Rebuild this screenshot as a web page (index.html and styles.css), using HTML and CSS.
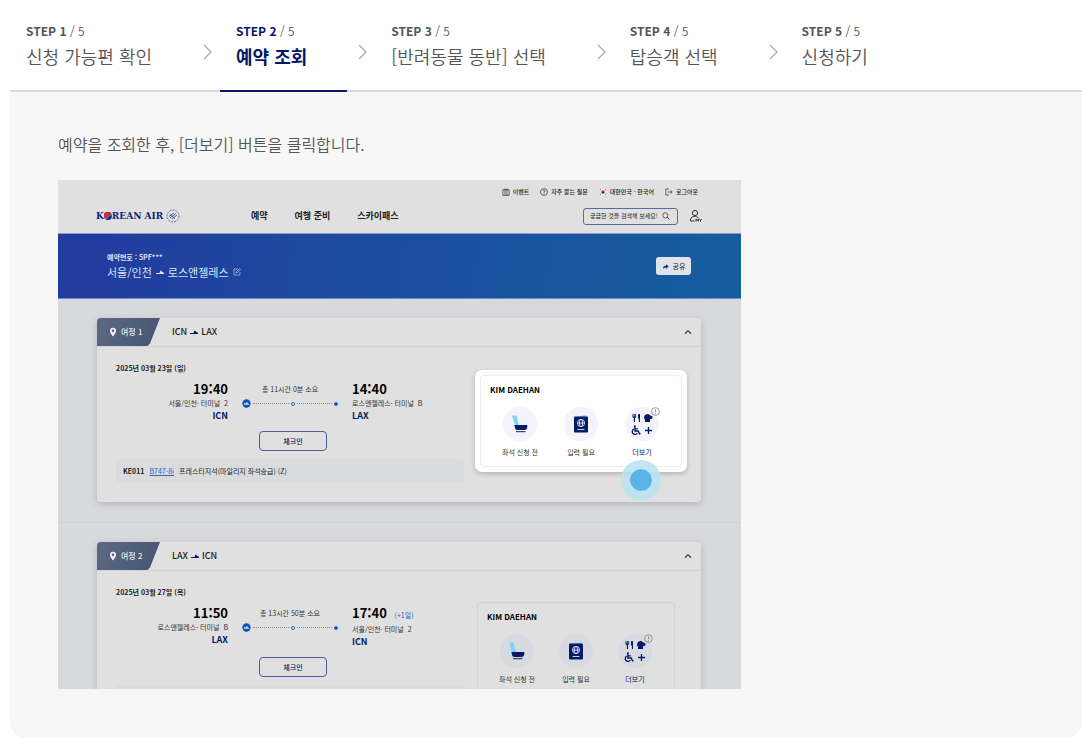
FILE: index.html
```
<!DOCTYPE html>
<html lang="ko">
<head>
  <meta charset="UTF-8">
  <title>[반려동물 동반] 신청 방법</title>
  <meta name="viewport" content="width=device-width, initial-scale=1.0">
  <link rel="stylesheet" href="styles.css">
</head>
<body>
  <!-- 공통 아이콘 -->
  <svg class="sprite" aria-hidden="true">
    <symbol id="chevron" viewBox="0 0 10 18">
      <path d="M1 2l7 7-7 7" fill="none" stroke="#aaa" stroke-width="1.3"/>
    </symbol>
    <symbol id="up" viewBox="0 0 8 6">
      <path d="M1 4.7l3-3 3 3" fill="none" stroke="#222" stroke-width="1.1"/>
    </symbol>
    <symbol id="pin" viewBox="0 0 8 10">
      <path d="M4 .8a3.1 3.1 0 0 0-3.1 3.1C.9 6 4 9.4 4 9.4S7.1 6 7.1 3.9A3.1 3.1 0 0 0 4 .8zm0 4.2a1.2 1.2 0 1 1 0-2.4A1.2 1.2 0 0 1 4 5z" fill="#e8ebf0"/>
    </symbol>
    <symbol id="route" viewBox="0 0 8 5">
      <path d="M0 3h8v1H0zM3.6 3L4.4.6 8 3z" fill="currentColor"/>
    </symbol>
    <symbol id="plane" viewBox="0 0 10 10">
      <circle cx="5" cy="5" r="4.6" fill="#0b52bb"/>
      <path d="M2.2 6.5V4l1 .9h1.3L5 3.2h.7l.7 1.7c1 0 1.5.3 1.5.8v.8z" fill="#dfe6f2"/>
    </symbol>
    <symbol id="seat" viewBox="0 0 18 18">
      <path d="M1 .5h4.500l2.500 10H4z" fill="#7fd3f5"/>
      <path d="M3.300 10h13v1.800c0 1.900-1 3.200-2.800 3.200H6.500c-1.500 0-2.200-.8-2.500-2.200z" fill="#051a66"/>
      <path d="M5 16.200h9.500v1H5z" fill="#051a66"/>
    </symbol>
    <symbol id="passport" viewBox="0 0 18 18">
      <path d="M4 1.800L14.500 0v2.500H4z" fill="#7fd3f5"/>
      <rect x="2" y="1.500" width="14" height="16" rx="1" fill="#051a66"/>
      <g fill="none" stroke="#dfe6f7" stroke-width=".9">
        <circle cx="9" cy="8" r="3.600"/>
        <ellipse cx="9" cy="8" rx="1.600" ry="3.600"/>
        <path d="M5.400 8h7.200M5.500 14.500h7"/>
      </g>
    </symbol>
    <symbol id="more" viewBox="0 0 22 22">
      <g fill="#051a66">
        <path d="M1.500 1h.8v2.500h.6V1h.8v2.500h.6V1h.8v3.200L4 5v4H2.800V5L1.500 4.200zM7 1.200L9 1v8H7.900V5.500H7z"/>
        <path d="M14.500 1.500l3-.5 1 1 3 1.500-.3 2.300-2.200.4V9h-5V6.500l-1-1 .3-2.500z"/>
        <circle cx="3.800" cy="13.300" r="1"/>
      </g>
      <g fill="none" stroke="#051a66" stroke-width="1.300">
        <path d="M3.900 14v4h3.300l1.300 2.800 1-.4M4 15.800h2.800"/>
        <path d="M2.800 16.200a2.700 2.700 0 1 0 3.500 3.800M17.500 14v7M14 17.500h7"/>
      </g>
    </symbol>
    <symbol id="info" viewBox="0 0 10 10">
      <circle cx="5" cy="5" r="4.300" fill="none" stroke="#777" stroke-width=".8"/>
      <path d="M5 2.500v3.200M5 6.600v1" stroke="#666" stroke-width=".8"/>
    </symbol>
  </svg>

  <!-- 단계 탭 -->
  <nav class="steps">
    <a class="step" href="#step1"><span class="step-no"><b>STEP 1</b> / 5</span><span class="step-title">신청 가능편 확인</span></a>
    <svg class="step-arrow"><use href="#chevron"/></svg>
    <a class="step active" href="#step2"><span class="step-no"><b>STEP 2</b> / 5</span><span class="step-title">예약 조회</span></a>
    <svg class="step-arrow"><use href="#chevron"/></svg>
    <a class="step" href="#step3"><span class="step-no"><b>STEP 3</b> / 5</span><span class="step-title">[반려동물 동반] 선택</span></a>
    <svg class="step-arrow"><use href="#chevron"/></svg>
    <a class="step" href="#step4"><span class="step-no"><b>STEP 4</b> / 5</span><span class="step-title">탑승객 선택</span></a>
    <svg class="step-arrow"><use href="#chevron"/></svg>
    <a class="step" href="#step5"><span class="step-no"><b>STEP 5</b> / 5</span><span class="step-title">신청하기</span></a>
  </nav>

  <main class="panel" id="step2">
    <p class="guide">예약을 조회한 후, [더보기] 버튼을 클릭합니다.</p>

    <div class="shot">
      <!-- 상단 -->
      <header class="top">
        <div class="util">
          <a href="#event"><svg viewBox="0 0 9 9"><path d="M1 2h7v6.300H1zM3.400 2v6M5.600 2v6M2.500 1l2 1 2-1" fill="none" stroke="#333" stroke-width=".8"/></svg>이벤트</a>
          <a href="#faq"><svg viewBox="0 0 9 9"><circle cx="4.500" cy="4.500" r="3.900" fill="none" stroke="#333" stroke-width=".8"/><path d="M3.300 3.500c0-1.600 2.400-1.500 2.400 0 0 .8-1.200.8-1.200 1.700M4.500 6v.9" fill="none" stroke="#333" stroke-width=".8"/></svg>자주 묻는 질문</a>
          <a href="#lang"><svg viewBox="0 0 9 9"><path d="M0 1h9v7H0z" fill="#f3f3f3"/><path d="M2.500 4.500a2 2 0 0 1 4 0z" fill="#c8283c"/><path d="M2.500 4.500a2 2 0 0 0 4 0z" fill="#123a8c"/><path d="M.8 2.700l1.200-1M7 1.700l1.200 1M.8 6.300l1.200 1M7 7.300l1.200-1" stroke="#222" stroke-width=".9"/></svg>대한민국 - 한국어</a>
          <a href="#logout"><svg viewBox="0 0 9 9"><path d="M4.500 1H1v7h3.500M3 4.500h5M6.300 2.700l1.800 1.800-1.800 1.800" fill="none" stroke="#333" stroke-width=".8"/></svg>로그아웃</a>
        </div>
        <div class="gnb">
          <a class="logo" href="#home">K<svg class="logo-o" viewBox="0 0 8 8"><circle cx="4" cy="4" r="3.900" fill="#0a2a85"/><path d="M.1 5A3.900 3.900 0 0 1 7.300 2C6 1.700 4.800 2.500 4.200 4S1.800 6.300.1 5z" fill="#d0282c"/><path d="M.8 6.200C3 6.500 4 5.500 4.500 4.500S6 2.800 7.500 2.800" fill="none" stroke="#e0e0e0" stroke-width=".6"/></svg>REAN AIR<svg class="logo-sky" viewBox="0 0 14 14"><circle cx="7" cy="7" r="6" fill="none" stroke="#44558f" stroke-width=".8" stroke-dasharray="2 1"/><path d="M3 7.500l5-3.500M4 9l6-4.500M6 10l5-4M4 5.500l5 4" stroke="#33478a" stroke-width=".8"/></svg></a>
          <div class="menu">
            <a href="#booking">예약</a>
            <a href="#prepare">여행 준비</a>
            <a href="#skypass">스카이패스</a>
          </div>
          <form class="search">
            <input type="text" placeholder="궁금한 것을 검색해 보세요!" aria-label="검색">
            <button type="button" aria-label="검색하기"><svg viewBox="0 0 9 9"><circle cx="3.800" cy="3.800" r="2.900" fill="none" stroke="#333" stroke-width=".8"/><path d="M6 6l2.300 2.300" stroke="#333"/></svg></button>
          </form>
          <a class="my" href="#my" aria-label="마이"><svg viewBox="0 0 14 14"><circle cx="6" cy="4" r="2.600" fill="none" stroke="#333"/><path d="M5.500 12H1.300C1.300 9 3 7.500 5 7.300c2 0 3.500.5 4.500 2M7 12.500v-2.500l1.200 1.500L9.400 10v2.500M10.300 10l1.200 1.200L12.700 10M11.500 11v1.700" fill="none" stroke="#333"/></svg></a>
        </div>
      </header>

      <!-- 예약 정보 -->
      <section class="booking">
        <div>
          <p class="booking-no">예약번호 : 5PF***</p>
          <h2>서울/인천 <svg class="route"><use href="#route"/></svg> 로스앤젤레스 <svg class="edit" viewBox="0 0 8 8"><path d="M5 1H1v6h6V4M3 5l.3-1.300L6.500.6l1 .9-3.200 3.200z" fill="none" stroke="#b9c6e6" stroke-width=".7"/></svg></h2>
        </div>
        <button class="share" type="button"><svg viewBox="0 0 8 8"><path d="M1 6.500C1.200 4 2.500 3 4.500 3V1.500L7.500 4l-3 2.500V5C3 5 2 5.300 1 6.500z" fill="#051a66"/></svg>공유</button>
      </section>

      <!-- 여정 1 -->
      <section class="trip">
        <article class="card">
          <div class="card-head">
            <span class="badge"><svg><use href="#pin"/></svg>여정 1</span>
            <h3>ICN <svg class="route"><use href="#route"/></svg> LAX</h3>
            <button class="fold" type="button" aria-label="접기"><svg><use href="#up"/></svg></button>
          </div>
          <div class="card-body">
            <div class="info">
              <p class="date">2025년 03월 23일 (일)</p>
              <div class="flight">
                <div class="from">
                  <p class="time">19:40</p>
                  <p class="place">서울/인천· 터미널 <span>2</span></p>
                  <p class="code">ICN</p>
                </div>
                <div class="duration">
                  <p>총 11시간 0분 소요</p>
                  <div class="line"><svg><use href="#plane"/></svg><i></i><span class="via"></span><i></i><span class="end"></span></div>
                </div>
                <div class="to">
                  <p class="time">14:40</p>
                  <p class="place">로스앤젤레스· 터미널 <span>B</span></p>
                  <p class="code">LAX</p>
                </div>
              </div>
              <button class="checkin" type="button">체크인</button>
              <div class="aircraft"><b>KE011</b><a href="#b747">B747-8i</a><span>프레스티지석(마일리지 좌석승급) (Z)</span></div>
            </div>
            <div class="pax spotlight">
              <div class="pax-box">
                <h4>KIM DAEHAN</h4>
                <div class="pax-menu">
                  <button type="button"><span class="round"><svg><use href="#seat"/></svg></span>좌석 신청 전</button>
                  <button type="button"><span class="round"><svg><use href="#passport"/></svg></span>입력 필요</button>
                  <button class="more" type="button"><span class="round"><svg><use href="#more"/></svg></span>더보기<svg class="alert"><use href="#info"/></svg></button>
                </div>
              </div>
              <span class="pointer"></span>
            </div>
          </div>
        </article>
      </section>

      <!-- 여정 2 -->
      <section class="trip">
        <article class="card">
          <div class="card-head">
            <span class="badge"><svg><use href="#pin"/></svg>여정 2</span>
            <h3>LAX <svg class="route"><use href="#route"/></svg> ICN</h3>
            <button class="fold" type="button" aria-label="접기"><svg><use href="#up"/></svg></button>
          </div>
          <div class="card-body">
            <div class="info">
              <p class="date">2025년 03월 27일 (목)</p>
              <div class="flight">
                <div class="from">
                  <p class="time">11:50</p>
                  <p class="place">로스앤젤레스· 터미널 <span>B</span></p>
                  <p class="code">LAX</p>
                </div>
                <div class="duration">
                  <p>총 13시간 50분 소요</p>
                  <div class="line"><svg><use href="#plane"/></svg><i></i><span class="via"></span><i></i><span class="end"></span></div>
                </div>
                <div class="to">
                  <p class="time">17:40 <small>(+1일)</small></p>
                  <p class="place">서울/인천· 터미널 <span>2</span></p>
                  <p class="code">ICN</p>
                </div>
              </div>
              <button class="checkin" type="button">체크인</button>
              <div class="aircraft"></div>
            </div>
            <div class="pax">
              <div class="pax-box">
                <h4>KIM DAEHAN</h4>
                <div class="pax-menu">
                  <button type="button"><span class="round"><svg><use href="#seat"/></svg></span>좌석 신청 전</button>
                  <button type="button"><span class="round"><svg><use href="#passport"/></svg></span>입력 필요</button>
                  <button class="more" type="button"><span class="round"><svg><use href="#more"/></svg></span>더보기<svg class="alert"><use href="#info"/></svg></button>
                </div>
              </div>
            </div>
          </div>
        </article>
      </section>
    </div>
  </main>
</body>
</html>
```
FILE: styles.css
```
* {
  margin: 0;
  padding: 0;
  box-sizing: border-box;
}

body {
  padding: 0 10px 11px;
  background: #fff;
  color: #555;
  font-family: 'Noto Sans CJK KR', 'Noto Sans', sans-serif;
  font-weight: 350;
}

a {
  color: inherit;
  text-decoration: none;
}

button {
  border: 0;
  background: none;
  font: inherit;
  color: inherit;
  cursor: pointer;
}

svg {
  display: block;
  flex: none;
}

.sprite {
  position: absolute;
  width: 0;
  height: 0;
}

/* 단계 탭 */
.steps {
  display: flex;
  height: 92px;
  border-bottom: 2px solid #d9d9d9;
}

.step {
  display: flex;
  flex-direction: column;
  height: 92px;
  padding: 21px 40px 0 16px;
  white-space: nowrap;
}

.step-no {
  font-size: 12px;
  line-height: 20px;
}

.step-no b {
  font-weight: 700;
}

.step-title {
  margin-top: 2px;
  font-size: 18px;
  line-height: 26px;
}

.step.active {
  border-bottom: 2px solid #051766;
  border-radius: 1px;
}

.step.active b,
.step.active .step-title {
  color: #051766;
  font-weight: 700;
}

.step-arrow {
  width: 10px;
  height: 18px;
  margin: 43px 7px 0 11px;
}

/* 본문 */
.panel {
  padding: 39px 48px 49px;
  background: #f7f7f7;
  border-radius: 0 0 16px 16px;
}

.guide {
  margin-bottom: 23px;
  font-size: 16px;
  line-height: 26px;
}

.shot {
  max-width: 683px;
  aspect-ratio: 683 / 509;
  overflow: hidden;
  background: #d8d9dc;
  color: #222;
  font-size: 7px;
  font-weight: 400;
  line-height: 12px;
}

/* 상단 */
.top {
  height: 53px;
  padding: 6px 38px 0;
  background: #e0e0e0;
}

.util {
  display: flex;
  justify-content: flex-end;
  gap: 11px;
  padding-right: 5px;
  font-size: 6px;
  font-weight: 500;
}

.util a {
  display: flex;
  align-items: center;
  gap: 3px;
}

.util svg {
  width: 8px;
  height: 8px;
}

.gnb {
  display: flex;
  align-items: center;
  height: 18px;
  margin-top: 9px;
}

.logo {
  display: flex;
  align-items: center;
  width: 155px;
  color: #0a1f7b;
  font-family: 'DejaVu Serif', serif;
  font-size: 9px;
  font-weight: 700;
}

.logo-o {
  width: 8px;
  height: 8px;
}

.logo-sky {
  width: 14px;
  height: 14px;
  margin-left: 3px;
}

.menu {
  display: flex;
  flex: 1;
  gap: 27px;
  font-size: 9px;
  font-weight: 700;
}

.search {
  display: flex;
  align-items: center;
  width: 95px;
  height: 17px;
  padding: 0 7px 0 6px;
  border: 1px solid #5a68a8;
  border-radius: 3px;
}

.search input {
  flex: 1;
  min-width: 0;
  border: 0;
  outline: 0;
  background: none;
  font: inherit;
  font-size: 6px;
}

.search input::placeholder {
  color: #222;
}

.search svg {
  width: 8px;
  height: 8px;
}

.my {
  margin-left: 11px;
}

.my svg {
  width: 14px;
  height: 14px;
}

/* 예약 정보 */
.booking {
  display: flex;
  align-items: center;
  justify-content: space-between;
  height: 66px;
  padding: 0 50px 0 49px;
  background: linear-gradient(100deg, #233a9f, #1b4c9f 45%, #155e9e);
  border-top: 1px solid #8b9cc9;
  border-bottom: 1px solid #6f8fc9;
  color: #dde3f2;
}

.booking-no {
  font-weight: 700;
}

.booking h2 {
  display: flex;
  align-items: center;
  gap: 4px;
  font-size: 11px;
  font-weight: 400;
  line-height: 18px;
}

.route {
  width: 8px;
  height: 5px;
}

.edit {
  width: 8px;
  height: 8px;
}

.share {
  display: flex;
  align-items: center;
  justify-content: center;
  gap: 4px;
  width: 35px;
  height: 18px;
  background: #e0e4ea;
  border-radius: 3px;
  color: #223;
}

.share svg {
  width: 7px;
  height: 7px;
}

/* 여정 카드 */
.trip {
  padding: 19px 40px 20px 39px;
  border-bottom: 1px solid #d0d1d4;
}

.card {
  background: #e0e0e0;
  border-radius: 4px;
  box-shadow: 0 2px 6px rgba(60, 70, 90, 0.25);
}

.card-head {
  display: flex;
  align-items: center;
  height: 29px;
  border-bottom: 1px solid #d3d4d7;
}

.badge {
  display: flex;
  align-items: center;
  gap: 4px;
  width: 63px;
  height: 28px;
  padding-left: 12px;
  background: linear-gradient(120deg, #5c6a85, #46546f);
  border-radius: 4px 0 0 0;
  clip-path: polygon(0 0, 100% 0, 84% 92%, 80% 100%, 0 100%);
  color: #e8ebf0;
  font-size: 8px;
  font-weight: 500;
}

.badge svg {
  width: 8px;
  height: 10px;
}

.card h3 {
  display: flex;
  flex: 1;
  align-items: center;
  gap: 3px;
  margin-left: 12px;
  font-size: 9px;
  font-weight: 500;
}

.card h3 svg {
  color: #051a66;
}

.fold {
  padding: 4px 9px;
}

.fold svg {
  width: 8px;
  height: 6px;
}

.card-body {
  display: flex;
  justify-content: space-between;
  align-items: flex-start;
  padding: 0 14px 20px 19px;
}

.info {
  width: 348px;
  padding-top: 15px;
}

.date {
  font-weight: 700;
  line-height: 12px;
}

.flight {
  display: grid;
  grid-template-columns: 1fr 96px 1fr;
  gap: 14px;
  margin-top: 7px;
}

.from {
  text-align: right;
}

.time {
  color: #000;
  font-size: 13px;
  font-weight: 700;
  line-height: 16px;
}

.time small {
  margin-left: 4px;
  color: #2c62c8;
  font-size: 7px;
  font-weight: 400;
}

.place {
  color: #333;
}

.place span {
  margin-left: 2px;
}

.code {
  color: #051a66;
  font-size: 9px;
  font-weight: 700;
  line-height: 14px;
}

.duration {
  padding-top: 2px;
  text-align: center;
  color: #333;
}

.line {
  display: flex;
  align-items: center;
  gap: 2px;
  margin-top: 4px;
}

.line svg {
  width: 9px;
  height: 9px;
}

.line i {
  flex: 1;
  border-top: 1px dotted #8b8f98;
}

.via,
.end {
  width: 4px;
  height: 4px;
  border: 1px solid #2c6ccc;
  border-radius: 50%;
}

.end {
  background: #0b52bb;
}

.checkin {
  display: block;
  width: 68px;
  height: 20px;
  margin: 8px 0 8px 143px;
  border: 1px solid #4d5f9c;
  border-radius: 4px;
  color: #051a66;
  font-weight: 500;
}

.aircraft {
  display: flex;
  align-items: center;
  gap: 5px;
  height: 23px;
  padding-left: 7px;
  background: #dadbdd;
  border-radius: 3px;
}

.aircraft b {
  font-weight: 700;
}

.aircraft a {
  color: #2c62c8;
  text-decoration: underline;
}

/* 승객 */
.pax {
  width: 198px;
  margin: 31px 12px 0 0;
}

.pax-box {
  height: 92px;
  padding: 8px 22px 0;
  border: 1px solid #d2d3d7;
  border-radius: 4px;
}

.pax h4 {
  margin-left: -13px;
  color: #000;
  font-size: 8px;
  font-weight: 700;
}

.pax-menu {
  display: flex;
  justify-content: space-between;
  margin-top: 11px;
}

.pax-menu button {
  position: relative;
  display: flex;
  flex-direction: column;
  align-items: center;
  width: 34px;
  color: #333;
  line-height: 12px;
  white-space: nowrap;
}

.round {
  display: flex;
  align-items: center;
  justify-content: center;
  width: 34px;
  height: 34px;
  margin-bottom: 5px;
  background: #d7dae1;
  border-radius: 50%;
}

.round svg {
  width: 18px;
  height: 18px;
}

.pax-menu .more {
  color: #051a66;
}

.more .round svg {
  width: 22px;
  height: 22px;
}

.alert {
  position: absolute;
  top: 0;
  right: -1px;
  width: 9px;
  height: 9px;
}

.spotlight {
  position: relative;
  width: 212px;
  margin: 23px 0 0;
  padding: 5px;
  background: #fff;
  border-radius: 7px;
  box-shadow: 0 2px 5px rgba(0, 0, 0, 0.2);
}

.spotlight .pax-box {
  border-color: #ececf0;
}

.spotlight .round {
  background: #f2f4f9;
}

.pointer {
  position: absolute;
  left: 146px;
  top: 90px;
  width: 40px;
  height: 40px;
  background: #5ab4e6;
  border: 9px solid rgba(184, 226, 243, 0.85);
  border-radius: 50%;
  background-clip: padding-box;
}
```
